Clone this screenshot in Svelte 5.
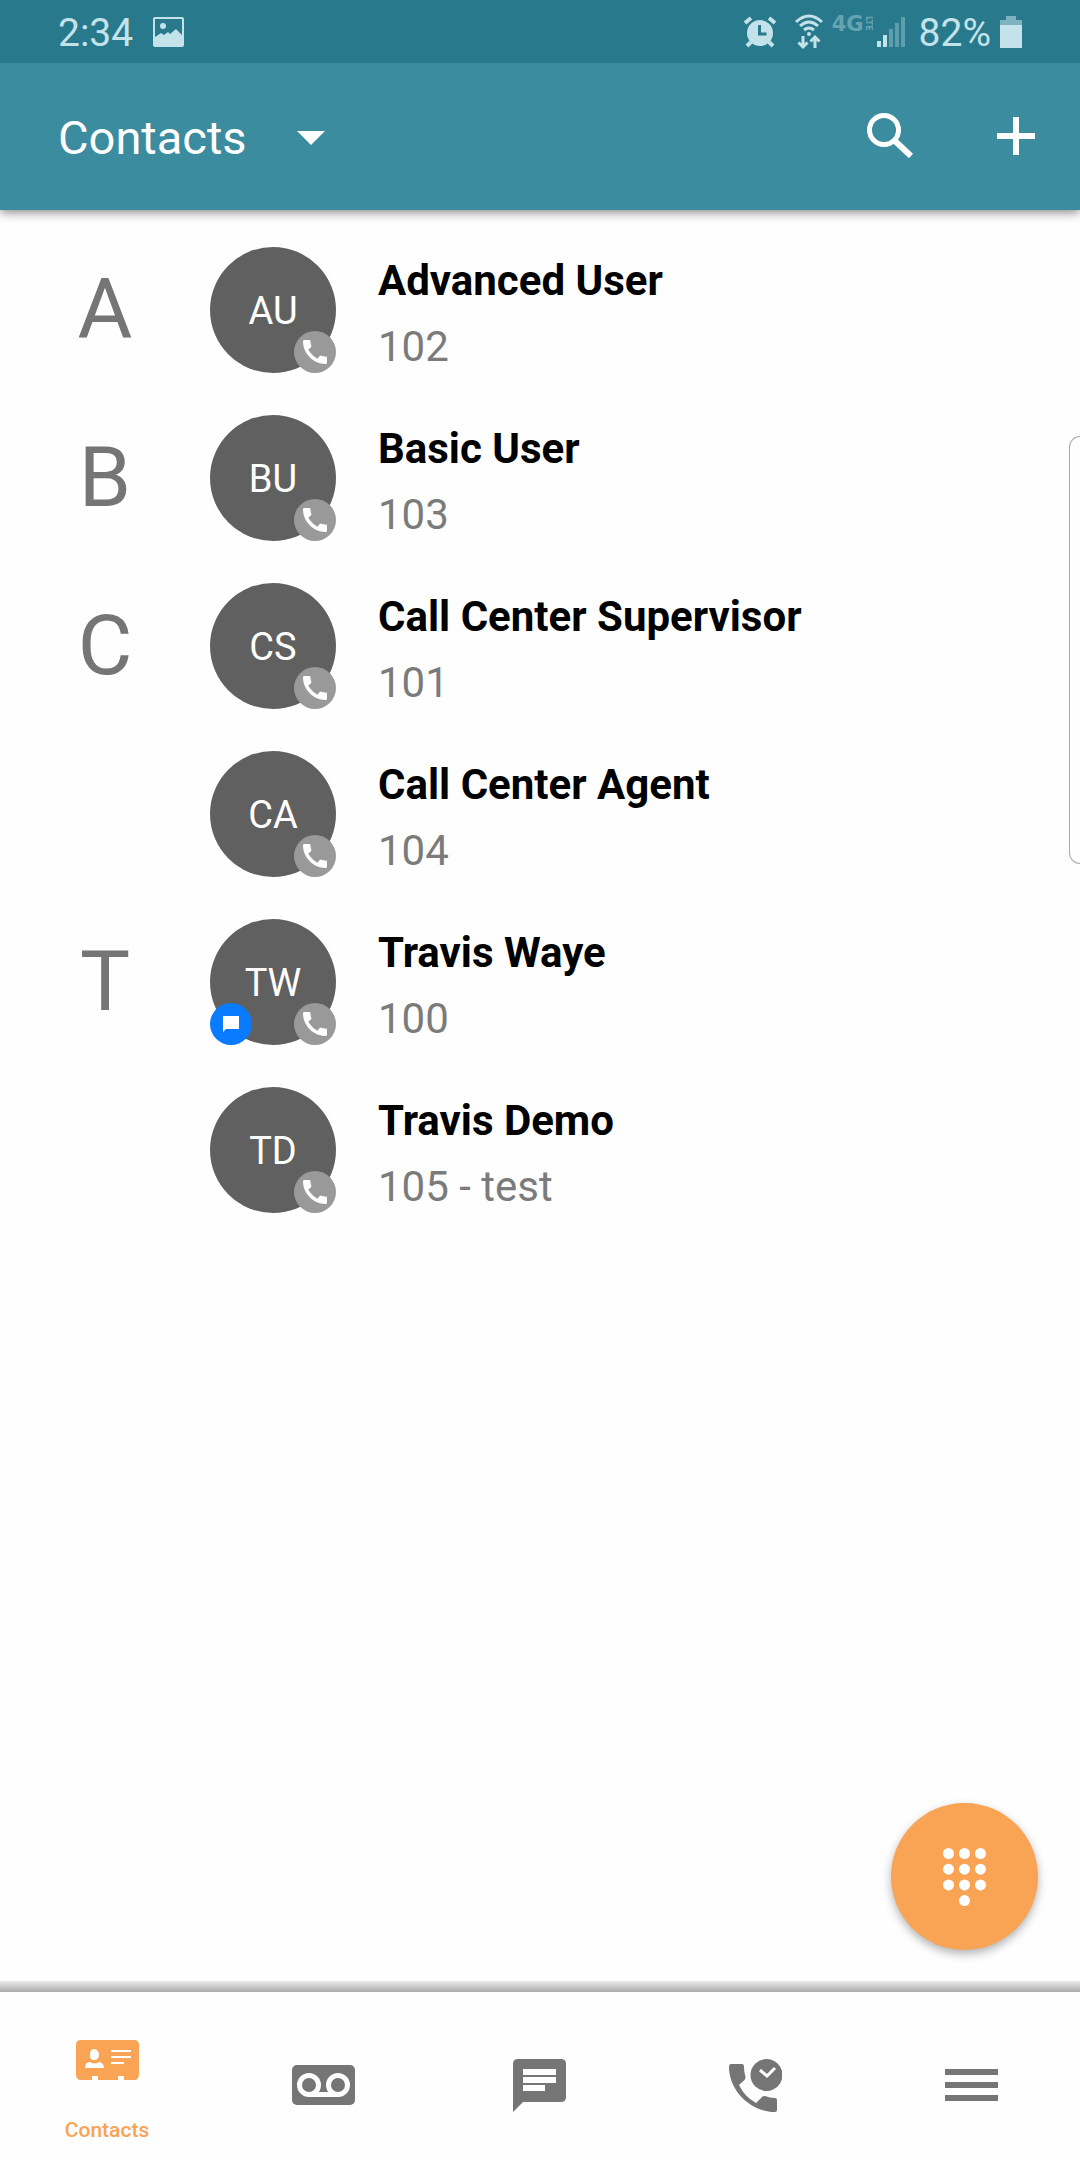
<script lang="ts">
	interface Contact {
		name: string;
		initials: string;
		detail: string;
		letter?: string;
		hasMessages?: boolean;
	}

	const contacts: Contact[] = [
		{ name: 'Advanced User', initials: 'AU', detail: '102', letter: 'A' },
		{ name: 'Basic User', initials: 'BU', detail: '103', letter: 'B' },
		{ name: 'Call Center Supervisor', initials: 'CS', detail: '101', letter: 'C' },
		{ name: 'Call Center Agent', initials: 'CA', detail: '104' },
		{ name: 'Travis Waye', initials: 'TW', detail: '100', letter: 'T', hasMessages: true },
		{ name: 'Travis Demo', initials: 'TD', detail: '105 - test' },
	];

	// keypad dots: three full rows, then the single zero
	const dots = [0, 1, 2].flatMap((row) => [0, 1, 2].map((col) => [col, row]));
	dots.push([1, 3]);

	let tab = $state('contacts');
</script>

<svelte:head>
	<title>Contacts</title>
</svelte:head>

<div class="app">
	<div class="status">
		<span class="reading">2:34</span>
		<svg class="photo" width="31" height="30" viewBox="0 0 31 30">
			<path fill-rule="evenodd" d="M2 0h27q2 0 2 2v26q0 2-2 2H2q-2 0-2-2V2q0-2 2-2zM2 2v18l6-4 3 2 4-3 2 2 6-5 6 6V2z" />
			<circle cx="10" cy="9" r="3" />
		</svg>
		<div class="indicators">
			<svg width="34" height="32" viewBox="0 0 34 32">
				<circle cx="17" cy="17" r="13" />
				<path class="line" stroke-width="4" d="M2 7l6-5M32 7l-6-5M8 26l-4 4M26 26l4 4" />
				<path class="cut" d="M16.500 9v9h7" />
			</svg>
			<svg class="wifi" width="28" height="36" viewBox="0 0 28 36">
				<path class="line" stroke-width="3" d="M1 8q13-12 26 0M5 12q9-8 18 0M9 16q5-4 10 0" />
				<circle cx="14" cy="20" r="2" />
				<path class="line" stroke-width="3" d="M8 22v11M3.500 28.500L8 33l4.500-4.500M20 34V23M15.500 27.500L20 23l4.500 4.500" />
			</svg>
			<div class="network"><span>4G</span><small>LTE</small></div>
			<svg class="signal" width="28" height="30" viewBox="0 0 28 30">
				<path d="M0 24h4v6H0zM6 18h4v12H6z" />
				<path opacity=".35" d="M12 12h4v18h-4zM18 6h4v24h-4zM24 0h4v30h-4z" />
			</svg>
			<span class="reading">82%</span>
			<svg class="battery" width="22" height="32" viewBox="0 0 22 32">
				<path opacity=".55" d="M6 0h10v4h6v5H0V4h6z" />
				<path d="M0 9h22v23H0z" />
			</svg>
		</div>
	</div>

	<header>
		<h1>
			<button class="title" aria-haspopup="listbox">
				Contacts
				<svg width="28" height="14" viewBox="0 0 28 14"><path d="M0 0h28L14 14z" /></svg>
			</button>
		</h1>
		<div class="actions">
			<button aria-label="Search">
				<svg width="46" height="46" viewBox="0 0 46 46">
					<circle class="line" stroke-width="5" cx="17" cy="17" r="14.500" />
					<path class="line" stroke-width="6" d="M28 28l16 15" />
				</svg>
			</button>
			<button aria-label="Add contact">
				<svg width="38" height="38" viewBox="0 0 38 38"><path d="M16 0h6v16h16v6H22v16h-6V22H0v-6h16z" /></svg>
			</button>
		</div>
	</header>

	<main>
		<ul>
			{#each contacts as contact}
				<li>
					<span class="letter">{contact.letter ?? ''}</span>
					<div class="avatar">
						{contact.initials}
						{#if contact.hasMessages}
							<span class="badge message">
								<svg width="16" height="16" viewBox="0 0 16 16"><path d="M0 0h16v13H3l-3 3z" /></svg>
							</span>
						{/if}
						<span class="badge phone">
							<svg width="24" height="24" viewBox="3 3 18 18">
								<path d="M20.010 15.380c-1.230 0-2.420-.2-3.530-.56-.35-.12-.74-.03-1.010.24l-1.570 1.970c-2.830-1.350-5.480-3.900-6.890-6.830l1.950-1.660c.27-.28.35-.67.24-1.020-.37-1.110-.56-2.300-.56-3.530 0-.54-.45-.99-.99-.99H4.190C3.650 3 3 3.240 3 3.990 3 13.280 10.730 21 20.010 21c.71 0 .99-.63.99-1.180v-3.450c0-.54-.45-.99-.99-.99z" />
							</svg>
						</span>
					</div>
					<div class="info">
						<strong>{contact.name}</strong>
						<span>{contact.detail}</span>
					</div>
				</li>
			{/each}
		</ul>
		<div class="edge"></div>
		<button class="dial" aria-label="Dial pad">
			<svg width="43" height="58" viewBox="0 0 43 58">
				{#each dots as [col, row]}
					<circle cx={5.5 + col * 16} cy={5.5 + row * 15.7} r="5.500" />
				{/each}
			</svg>
		</button>
	</main>

	<nav>
		<button class="labelled" class:active={tab === 'contacts'} onclick={() => (tab = 'contacts')}>
			<svg width="63" height="40" viewBox="0 0 63 40">
				<path d="M5 0h53q5 0 5 5v29q0 6-5 6H48v-4h-6v4H22v-4h-6v4H5q-5 0-5-6V5q0-5 5-5z" />
				<path class="white" d="M18 9c3 0 5 3 5 6s-2 5-5 5-4-2-4-5 1-6 4-6zM9 28q0-6 5-6 4 3 9 0 5 1 5 6zM35 10h20v2H35zM35 16h20v2H35zM35 22h13v2H35z" />
			</svg>
			Contacts
		</button>
		<button aria-label="Voicemail" class:active={tab === 'voicemail'} onclick={() => (tab = 'voicemail')}>
			<svg width="63" height="40" viewBox="0 0 63 40">
				<rect width="63" height="40" rx="5" />
				<path class="ring" d="M17 29.500h29" />
				<circle class="ring" cx="17" cy="20" r="9.500" />
				<circle class="ring" cx="46" cy="20" r="9.500" />
			</svg>
		</button>
		<button aria-label="Messages" class:active={tab === 'messages'} onclick={() => (tab = 'messages')}>
			<svg width="53" height="53" viewBox="0 0 53 53">
				<path fill-rule="evenodd" d="M5 0h43q5 0 5 5v33q0 5-5 5H10L0 53V5q0-5 5-5zM10 10v6h33v-6zM10 18v6h33v-6zM10 26v6h22v-6z" />
			</svg>
		</button>
		<button aria-label="Call history" class:active={tab === 'history'} onclick={() => (tab = 'history')}>
			<svg width="53" height="53" viewBox="0 0 53 53">
				<path d="M2 5h11q2 0 2 3 0 5 1.500 10 0 2-1 3L10 26c4 8 9 13 17 18l6-6q1-1 3-1 5 2 10 2 2 0 2 2v10q0 2-2 2C21 53 0 31 0 8q0-3 2-3z" />
				<circle cx="37.500" cy="16" r="16" />
				<path class="check" d="M31 11l7 6 8-8" />
			</svg>
		</button>
		<button aria-label="Menu" class:active={tab === 'menu'} onclick={() => (tab = 'menu')}>
			<svg width="53" height="32" viewBox="0 0 53 32"><path d="M0 0h53v6H0zM0 13h53v6H0zM0 26h53v6H0z" /></svg>
		</button>
	</nav>
</div>

<style>
	:global(body) {
		background: #fefefe;
	}

	.app {
		display: flex;
		flex-direction: column;
		min-height: 100vh;
		font-family: Roboto, sans-serif;
	}

	svg {
		display: block;
		flex: none;
		fill: currentColor;
	}

	button {
		display: flex;
		align-items: center;
		justify-content: center;
		padding: 0;
		border: none;
		background: none;
		color: inherit;
		font: inherit;
		cursor: pointer;
	}

	.line {
		fill: none;
		stroke: currentColor;
	}

	.status {
		display: flex;
		align-items: center;
		height: 63px;
		padding: 0 58px;
		background: #28798c;
		color: #c4e2e9;
		font-size: 39px;
		z-index: 2;
	}

	.reading {
		padding-top: 2px;
	}

	.photo {
		margin-left: 20px;
	}

	.indicators {
		display: flex;
		align-items: center;
		margin-left: auto;
	}

	.cut {
		fill: none;
		stroke: #28798c;
		stroke-width: 3;
	}

	.wifi {
		margin-left: 18px;
	}

	.network {
		display: flex;
		align-self: flex-start;
		margin: 8px 5px 0 9px;
		opacity: 0.4;
		font-family: "DejaVu Sans", sans-serif;
		font-size: 21px;
		font-weight: 700;
		line-height: 16px;
	}

	.network small {
		font-size: 8px;
		line-height: 8px;
		writing-mode: vertical-rl;
	}

	.signal {
		margin-right: 14px;
	}

	.battery {
		margin-left: 9px;
	}

	header {
		display: flex;
		align-items: center;
		justify-content: space-between;
		height: 147px;
		padding: 0 45px 0 58px;
		background: #3b8c9f;
		box-shadow: 0 2px 10px rgba(0, 0, 0, 0.5);
		color: #fff;
		z-index: 1;
	}

	h1 {
		margin: 0;
		font-size: 47px;
		font-weight: 400;
	}

	.title {
		gap: 50px;
		padding-top: 2px;
	}

	.actions {
		display: flex;
		align-items: center;
		gap: 84px;
		padding-bottom: 2px;
	}

	main {
		position: relative;
		flex: 1;
	}

	ul {
		margin: 0;
		padding: 16px 0;
		list-style: none;
	}

	li {
		display: flex;
		align-items: flex-start;
		height: 126px;
		padding: 21px 0;
	}

	.letter {
		width: 210px;
		color: #757575;
		font-size: 84px;
		line-height: 126px;
		text-align: center;
	}

	.avatar {
		position: relative;
		width: 126px;
		height: 126px;
		margin-right: 42px;
		border-radius: 50%;
		background: #606060;
		color: #fff;
		font-size: 38px;
		line-height: 128px;
		text-align: center;
	}

	.badge {
		position: absolute;
		bottom: 0;
		display: flex;
		align-items: center;
		justify-content: center;
		width: 42px;
		height: 42px;
		border-radius: 50%;
	}

	.phone {
		right: 0;
		background: #999;
	}

	.message {
		left: 0;
		background: #0a7aff;
	}

	.info {
		display: flex;
		flex-direction: column;
		padding-top: 1px;
		color: #7b7b7b;
		font-size: 42px;
		line-height: 66px;
	}

	strong {
		color: #000;
	}

	.edge {
		position: absolute;
		top: 226px;
		right: 0;
		width: 10px;
		height: 426px;
		border: 1px solid #aaa;
		border-right: none;
		border-radius: 12px 0 0 12px;
	}

	.dial {
		position: absolute;
		right: 42px;
		bottom: 42px;
		width: 147px;
		height: 147px;
		border-radius: 50%;
		background: #f8a454;
		box-shadow: 0 4px 10px rgba(0, 0, 0, 0.3);
		color: #fff;
	}

	nav {
		position: relative;
		display: flex;
		height: 168px;
		color: #757575;
	}

	/* shadow the bar casts up over the list */
	nav::before {
		content: "";
		position: absolute;
		bottom: 100%;
		width: 100%;
		height: 11px;
		background: linear-gradient(#ececec, #aaa);
	}

	nav button {
		flex: 1;
		padding: 18px 2px 0 0;
	}

	nav .labelled {
		flex-direction: column;
		gap: 38px;
		padding-top: 30px;
		font-size: 21px;
		font-weight: 500;
	}

	.active {
		color: #f8a454;
	}

	.white {
		fill: #fff;
	}

	.ring {
		fill: none;
		stroke: #fff;
		stroke-width: 5;
	}

	.check {
		fill: none;
		stroke: #fff;
		stroke-width: 3;
	}
</style>
